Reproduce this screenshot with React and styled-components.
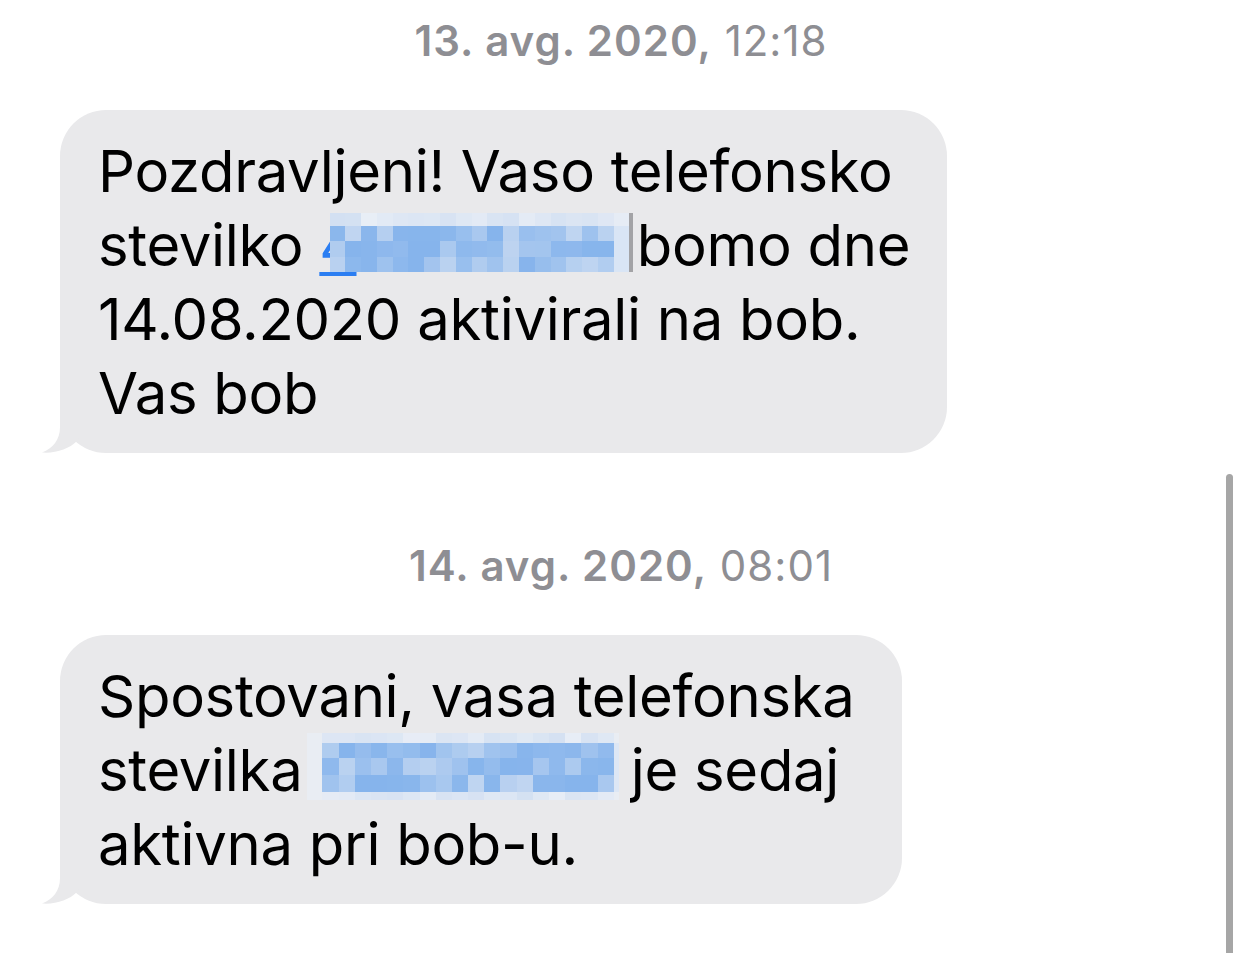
import React from "react";
import styled, { createGlobalStyle } from "styled-components";

const Global = createGlobalStyle`
  html, body { margin: 0; padding: 0; background: #fff; overflow: hidden; }
  body { font-family: Inter, "Noto Sans", sans-serif; -webkit-font-smoothing: antialiased; }
`;

const Screen = styled.div`
  position: relative;
  width: 1242px;
  height: 953px;
  overflow: hidden;
  background: #fff;
`;

const Thread = styled.div`
  display: flex;
  flex-direction: column;
`;

const Section = styled.section`
  display: flex;
  flex-direction: column;
  margin-top: ${(p) => p.$top}px;
`;

const Stamp = styled.div`
  height: 80px;
  margin-bottom: 30px;
  display: flex;
  align-items: center;
  justify-content: center;
  font-family: Inter, "Noto Sans", sans-serif;
  font-size: 42px;
  letter-spacing: 1px;
  font-weight: 400;
  color: #8e8e93;
  white-space: pre;
`;

const StampDate = styled.span`
  font-weight: 600;
`;

const Bubble = styled.div`
  position: relative;
  box-sizing: border-box;
  width: ${(p) => p.$w}px;
  margin-left: 60px;
  padding: 23.5px 36px 23.5px 38px;
  background: #e9e9eb;
  border-radius: 46px;
  font-family: Inter, "Noto Sans", sans-serif;
  font-size: 58px;
  line-height: 74px;
  letter-spacing: -0.3px;
  color: #000;
`;

const Line = styled.div`
  white-space: nowrap;
  height: 74px;
`;

const Tail = styled.svg`
  position: absolute;
  left: -20px;
  bottom: 0;
  width: 60px;
  height: 60px;
`;

const Link = styled.span`
  color: #2b7ef2;
  text-decoration: underline;
  text-decoration-thickness: 4px;
  text-underline-offset: 6px;
`;

const Pixels = styled.span`
  display: inline-grid;
  vertical-align: top;
  margin-top: ${(p) => p.$mt}px;
  margin-left: ${(p) => p.$ml}px;
  margin-right: ${(p) => p.$mr}px;
  grid-template-columns: ${(p) => p.$cols};
  grid-template-rows: ${(p) => p.$rows};
  position: relative;
`;

const Cell = styled.span`
  display: block;
  background: ${(p) => p.$c};
`;

const Scrollbar = styled.div`
  position: absolute;
  right: 9px;
  top: 474px;
  bottom: -10px;
  width: 7px;
  border-radius: 4px;
  background: #a6a6a6;
`;

function rng(seed) {
  let a = seed >>> 0;
  return () => {
    a |= 0;
    a = (a + 0x6d2b79f5) | 0;
    let t = Math.imul(a ^ (a >>> 15), 1 | a);
    t = (t + Math.imul(t ^ (t >>> 7), 61 | t)) ^ t;
    return ((t ^ (t >>> 14)) >>> 0) / 4294967296;
  };
}

function mix(c1, c2, t) {
  const p = (c) => [1, 3, 5].map((i) => parseInt(c.slice(i, i + 2), 16));
  const a = p(c1);
  const b = p(c2);
  return (
    "#" +
    a
      .map((v, i) => Math.round(v + (b[i] - v) * t).toString(16).padStart(2, "0"))
      .join("")
  );
}

function PixelBlock({ seed, cols, colW, rows, lightRows, leftEdge, rightEdges, mt, ml, mr }) {
  const r = rng(seed);
  const colSizes = [];
  if (leftEdge) colSizes.push(leftEdge.w);
  for (let i = 0; i < cols; i++) colSizes.push(colW);
  rightEdges.forEach((e) => colSizes.push(e.w));
  const cells = [];
  rows.forEach((h, ri) => {
    const light = lightRows.includes(ri);
    if (leftEdge) cells.push(<Cell key={`l${ri}`} $c={leftEdge.c} />);
    for (let ci = 0; ci < cols; ci++) {
      const t = r();
      const c = light
        ? mix("#d3e0f2", "#e9eef6", t)
        : mix("#86b4ec", "#c3d7f1", t * t);
      cells.push(<Cell key={`${ri}-${ci}`} $c={c} />);
    }
    rightEdges.forEach((e, ei) =>
      cells.push(<Cell key={`r${ri}-${ei}`} $c={light ? e.lc || e.c : e.c} />)
    );
  });
  return (
    <Pixels
      $mt={mt}
      $ml={ml}
      $mr={mr}
      $cols={colSizes.map((w) => `${w}px`).join(" ")}
      $rows={rows.map((h) => `${h}px`).join(" ")}
    >
      {cells}
    </Pixels>
  );
}

function BubbleTail() {
  return (
    <Tail viewBox="0 0 60 60">
      <path
        d="M20 0 L20 34 C20 47 13 55 2 59.5 C16 60.5 29 56 37 48 L42 40 L42 0 Z"
        fill="#e9e9eb"
      />
    </Tail>
  );
}

export default function App() {
  return (
    <Screen>
      <Global />
      <Thread>
        <Section $top={0}>
          <Stamp>
            <StampDate>13. avg. 2020,</StampDate> 12:18
          </Stamp>
          <Bubble $w={887}>
            <Line>Pozdravljeni! Vaso telefonsko</Line>
            <Line>
              stevilko <Link>4</Link>
              <PixelBlock
                seed={7}
                cols={18}
                colW={15.8}
                rows={[13, 15, 16, 15]}
                lightRows={[0]}
                rightEdges={[
                  { w: 15, c: "#d9e5f5", lc: "#e6ecf5" },
                  { w: 4, c: "#a3a3a6" },
                ]}
                mt={5.5}
                ml={-27}
                mr={4}
              />
              bomo dne
            </Line>
            <Line>14.08.2020 aktivirali na bob.</Line>
            <Line>Vas bob</Line>
            <BubbleTail />
          </Bubble>
        </Section>
        <Section $top={72}>
          <Stamp>
            <StampDate>14. avg. 2020,</StampDate> 08:01
          </Stamp>
          <Bubble $w={842}>
            <Line>Spostovani, vasa telefonska</Line>
            <Line>
              stevilka
              <PixelBlock
                seed={21}
                cols={18}
                colW={16.2}
                rows={[10, 15, 17, 17, 8]}
                lightRows={[0, 4]}
                leftEdge={{ w: 15, c: "#e9edf3" }}
                rightEdges={[{ w: 5, c: "#dde7f5", lc: "#e9edf3" }]}
                mt={0.5}
                ml={5}
                mr={12}
              />
              je sedaj
            </Line>
            <Line>aktivna pri bob-u.</Line>
            <BubbleTail />
          </Bubble>
        </Section>
      </Thread>
      <Scrollbar />
    </Screen>
  );
}
